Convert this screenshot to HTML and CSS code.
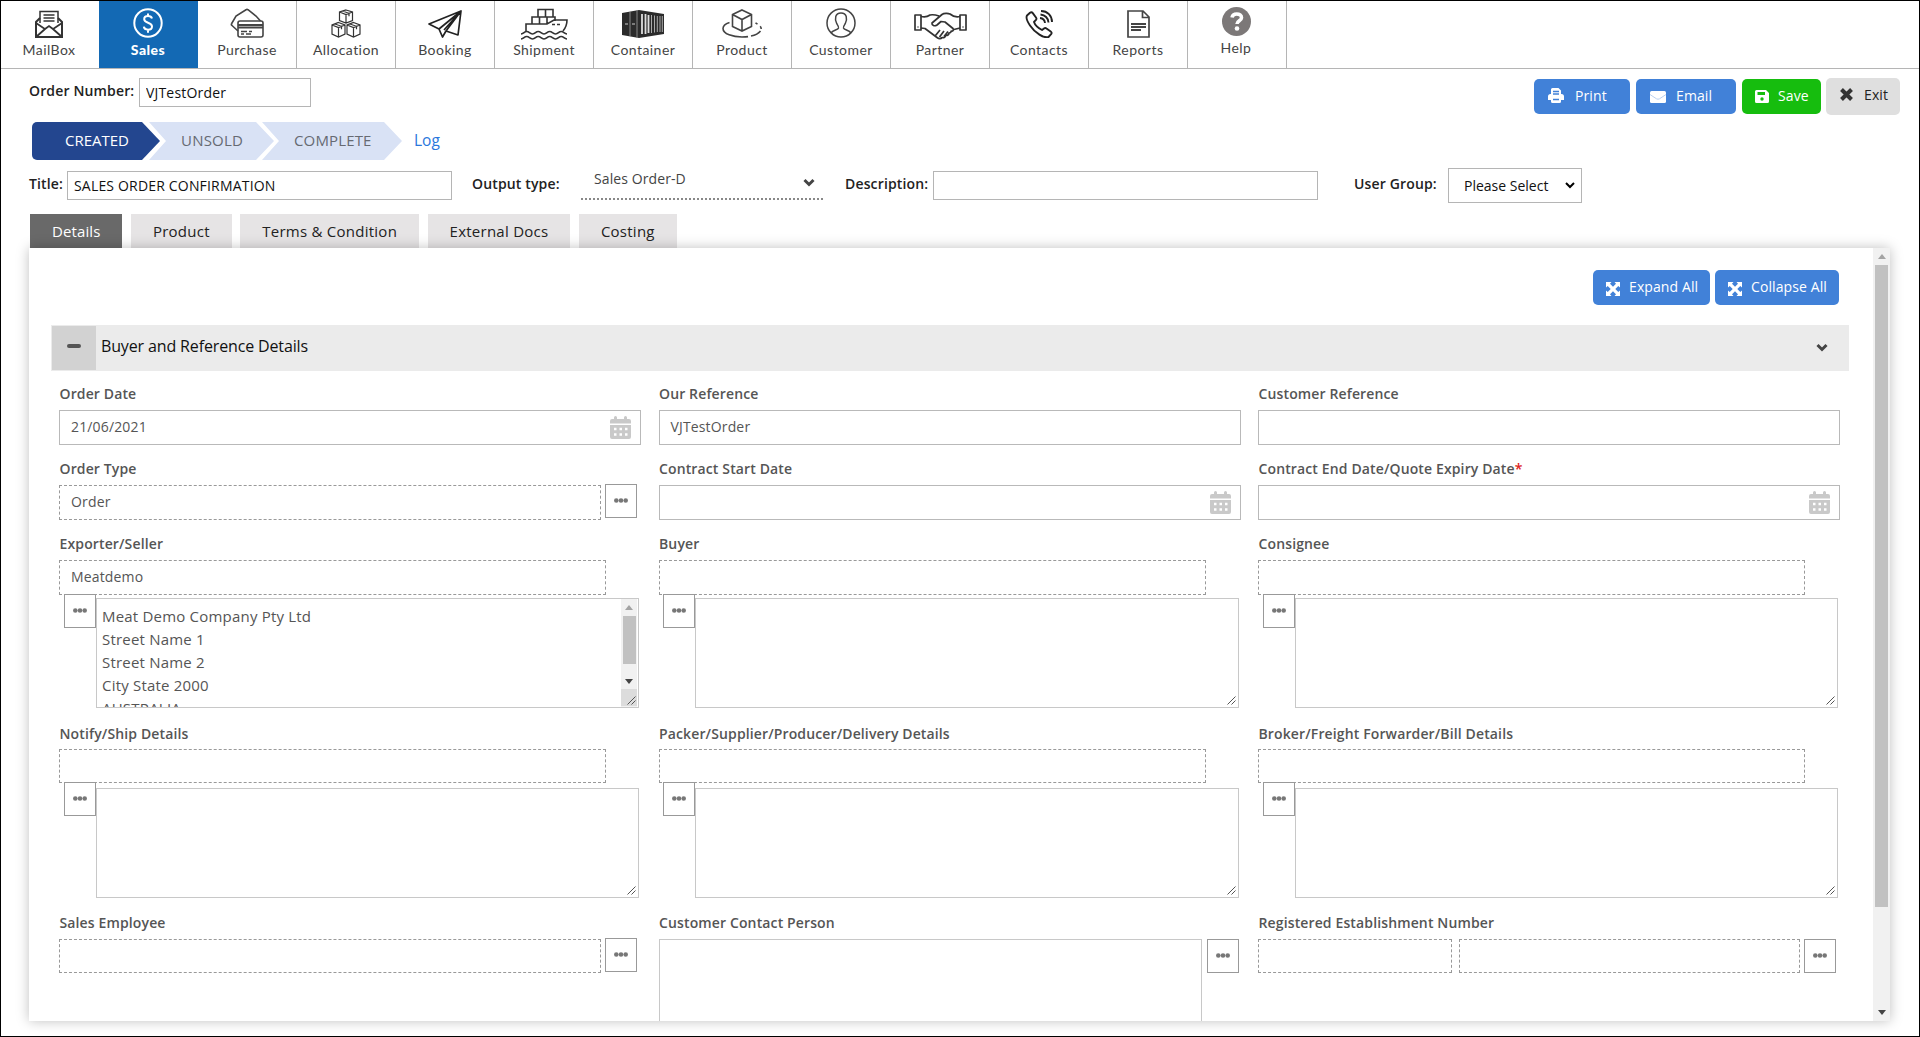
FILE: index.html
```html
<!DOCTYPE html>
<html lang="en">
<head>
    <meta charset="UTF-8">
    <meta name="viewport" content="width=device-width, initial-scale=1.0">
    <title>Sales Order</title>
    <link rel="stylesheet" href="styles.css">
</head>
<body>
    <!-- shared icons -->
    <svg class="defs" width="0" height="0">
        <symbol id="i-chevron" viewBox="0 0 12 8"><path d="M1.5 1.5 6 6l4.500-4.500" fill="none" stroke="currentColor" stroke-width="3"/></symbol>
        <symbol id="i-calendar" viewBox="0 0 21 23"><path fill="currentColor" d="M2 3h2V1.500a1.500 1.500 0 0 1 3 0V3h7V1.500a1.500 1.500 0 0 1 3 0V3h2a2 2 0 0 1 2 2v2.500H0V5a2 2 0 0 1 2-2zM0 9h21v12a2 2 0 0 1-2 2H2a2 2 0 0 1-2-2z"/><path stroke="#fff" stroke-width="2.500" stroke-dasharray="2.500 3" d="M4 13h14M4 18.500h14"/></symbol>
        <symbol id="i-dots" viewBox="0 0 14 5"><g fill="#777"><circle cx="2.300" cy="2.500" r="2.300"/><circle cx="7" cy="2.500" r="2.300"/><circle cx="11.700" cy="2.500" r="2.300"/></g></symbol>
        <symbol id="i-grip" viewBox="0 0 9 9"><path d="M.5 8.500 8.500.5M4.500 8.500l4-4" stroke="#555" fill="none"/></symbol>
        <symbol id="i-up" viewBox="0 0 8 5"><path d="M0 5 4 0l4 5z" fill="#a3a3a3"/></symbol>
        <symbol id="i-down" viewBox="0 0 8 5"><path d="M0 0h8L4 5z" fill="#444"/></symbol>
        <symbol id="i-expand" viewBox="0 0 14 14"><path fill="#fff" d="M0 0h5.500L4 1.700l3 3 3-3L8.500 0H14v5.500L12.300 4l-3 3 3 3L14 8.500V14H8.500l1.500-1.700-3-3-3 3L5.500 14H0V8.500L1.700 10l3-3-3-3L0 5.500z"/></symbol>
    </svg>

    <nav class="topnav">
        <a class="nav-item" href="#">
            <svg width="28" height="28" viewBox="0 0 28 28" fill="none" stroke="#333" stroke-width="1.500"><path d="M5 13V1.500h18V13M8.500 5h11M8.500 8h11M8.500 11h11"/><path d="M5 8 1 12v15h26V12l-4-4" stroke-width="2"/><path d="m1 13 9 6L1 27M27 13l-9 6 9 8M10 19l4-3 4 3" stroke-width="1.800"/></svg>
            <span>MailBox</span>
        </a>
        <a class="nav-item active" href="#">
            <svg width="30" height="30" viewBox="0 0 30 30" fill="none" stroke="#fff" stroke-width="2"><circle cx="15" cy="15" r="13.700"/><path d="M19 10.500c-.5-1.800-2-2.500-4-2.500-2.200 0-3.800 1.200-3.800 3.200 0 4.300 7.800 2.800 7.800 7.300 0 2-1.700 3.200-4 3.200s-3.900-1-4.200-3M15 5.500V8M15 21.700v3"/></svg>
            <span>Sales</span>
        </a>
        <a class="nav-item" href="#">
            <svg width="34" height="30" viewBox="0 0 34 30" fill="none" stroke="#444" stroke-width="1.600"><rect x="8" y="13" width="25" height="16" rx="2"/><path d="M8 17h25M8 19.500h25" stroke-width="2"/><path d="M11 23.500h6M11 26h3M19 23.500h3M16 26h5M8 23l-6-5.500a1.500 1.500 0 0 1-.3-2L6 8 16 1.700a2 2 0 0 1 2 0l8 6.300 4.500 5"/></svg>
            <span>Purchase</span>
        </a>
        <a class="nav-item" href="#">
            <svg width="30" height="29" viewBox="0 0 30 29" fill="none" stroke="#333" stroke-width="1.200"><path d="m15 1 6.500 2v8.500L15 14l-6.500-2.500V3zM8.500 3 15 5.500 21.500 3M15 5.500V14M11.500 2l6.500 2.300v3"/><path d="M7.500 13.500 14 16v9l-6.500 3L1 25v-9zM1 16l6.500 2.500L14 16M7.500 18.500V28M4 15l6.500 2.300v3M22.500 13.500 29 16v9l-6.500 3-6.500-3v-9zM16 16l6.500 2.500L29 16M22.500 18.500V28M19 15l6.500 2.300v3"/></svg>
            <span>Allocation</span>
        </a>
        <a class="nav-item" href="#">
            <svg width="34" height="28" viewBox="0 0 34 28" fill="none" stroke="#222" stroke-width="1.700" stroke-linejoin="round"><path d="M33 1 1 14l10 5zM33 1 11 19l3.500 8L18 21zM33 1l-3 24-12-4zM33 1 16 20"/></svg>
            <span>Booking</span>
        </a>
        <a class="nav-item low" href="#">
            <svg width="48" height="32" viewBox="0 0 48 32" fill="none" stroke="#333" stroke-width="1.600"><path d="M18 9V1.500h15V9M25.500 1.500V9M12 16V9h23v4M19.500 9v7M27 9v7M6 23v-7h21l7-4h13c0 5-1.500 8-4 11M32 16.500h3M37 16.500h3"/><path d="M1 26c3 0 3-2.500 5.700-2.500S9.500 26 12.500 26s3-2.500 5.700-2.500S21 26 24 26s3-2.500 5.700-2.500S32.500 26 35.500 26s3-2.500 5.700-2.500S44 26 47 26M1 31c3 0 3-2.500 5.700-2.500S9.500 31 12.500 31s3-2.500 5.700-2.500S21 31 24 31s3-2.500 5.700-2.500S32.500 31 35.500 31s3-2.500 5.700-2.500S44 31 47 31"/></svg>
            <span>Shipment</span>
        </a>
        <a class="nav-item" href="#">
            <svg width="42" height="28" viewBox="0 0 42 28"><path d="M0 3 17 0v28L0 25zM17 0l25 4v20l-25 4z" fill="#2b2b2b"/><path d="M8 2v24M15 0v28" stroke="#888"/><path d="M3 14h3M10 14h3" stroke="#ccc"/><path d="M20 4v20M23.500 4v20M26.500 5v18" stroke="#ddd" stroke-width="1.800"/><path d="M29.500 5v18M32.500 5.500v17M35.300 6v16M38 6v16M40.300 6v16" stroke="#aaa"/></svg>
            <span>Container</span>
        </a>
        <a class="nav-item" href="#">
            <svg width="40" height="29" viewBox="0 0 40 29" fill="none" stroke="#444" stroke-width="1.600"><path d="m20 1 9.500 4.500v12L20 22l-9.500-4.500v-12zM10.500 5.500 20 10.500l9.500-5M20 10.500V22"/><path d="M7.500 13.500C3 15 1 17 1 19.500 1 25 11 28 20 28c2 0 4 0 6-.4M29 27c5-1 8-3 9.500-5M39.200 20c0-1-.3-2-1-2.800M35.500 15l-2-1"/></svg>
            <span>Product</span>
        </a>
        <a class="nav-item" href="#">
            <svg width="30" height="30" viewBox="0 0 30 30" fill="none" stroke="#444" stroke-width="1.500"><circle cx="15" cy="15" r="14"/><path d="M5 25c2-3 7-3 7.500-5 .3-1.500-.5-2.500-1.800-4.500C8.500 11 9 5 15 5s6.500 6 4.300 10.500c-1.300 2-2.100 3-1.800 4.500.5 2 5.500 2 7.500 5"/></svg>
            <span>Customer</span>
        </a>
        <a class="nav-item low" href="#">
            <svg width="53" height="28" viewBox="0 0 53 28" fill="none" stroke="#333" stroke-width="1.700" stroke-linejoin="round"><path d="M1 3h6v15H1zM46 3h6v15h-6z"/><path d="M3.500 15h1M48.500 15h1M7 4.500c4 1 7 0 9-1.500 3-.7 6 0 9 1M46 4.500c-4 1-7 0-10-2.500-2-.8-6-.8-8 .5L18 11c-.3 2.500 2.500 3.500 5 2l4-3.500 4 .5 8 6.500c1 1.500 0 3-2 2.500M46 16l-6 1.500M7 16l4 .5 12 9c2 1.500 4 1.500 5 0 2 .5 3.500-.5 3.500-2 2 0 3.500-1 3.500-2.500 1.500 0 2.500-1 2-2.500M26 18l-4.500 5.500M30 19l-4.500 6M34 19.500l-4 5"/></svg>
            <span>Partner</span>
        </a>
        <a class="nav-item" href="#">
            <svg width="28" height="28" viewBox="0 0 28 28" fill="none" stroke="#222" stroke-width="1.900" stroke-linejoin="round"><path d="M2 5.500 5 2.800c1-.8 2-.7 2.800.3L11 7.500c.7 1 .5 2-.3 2.700L9 12c1 3 4 6 8 8l2-1.600c.8-.6 1.700-.6 2.500 0l4.200 3c1 .8 1.200 1.800.4 2.800L23.500 27C19 28.500 10 23 5 15.500 2 11 .5 8 2 5.500z"/><path d="M16 1c6.500 0 11 4.500 11 11M15.500 4.500C20 5 23 8 23.500 12.500M15 8c3 .3 4.700 2 5 5"/></svg>
            <span>Contacts</span>
        </a>
        <a class="nav-item" href="#">
            <svg width="23" height="28" viewBox="0 0 23 28" fill="none" stroke="#444" stroke-width="1.700"><path d="M1 1h15l6 6v20H1zM15.500 1v6.500H22"/><path d="M4 14h15M4 17h15M4 20h10" stroke-width="2"/></svg>
            <span>Reports</span>
        </a>
        <a class="nav-item help" href="#">
            <svg width="29" height="29" viewBox="0 0 29 29"><circle cx="14.500" cy="14.500" r="14.500" fill="#7c7878"/><path d="M10 10.500c.5-2.500 2-3.500 4.700-3.500 2.800 0 4.800 1.400 4.800 3.700 0 3.200-4.500 3-4.500 6.300" fill="none" stroke="#fff" stroke-width="3.600"/><circle cx="15" cy="21.500" r="2.300" fill="#fff"/></svg>
            <span>Help</span>
        </a>
    </nav>

    <header class="order-bar">
        <label class="lbl" for="order-no">Order Number:</label>
        <input class="top-input order-no" id="order-no" value="VJTestOrder">
        <div class="actions">
            <button class="btn print"><svg width="16" height="15" viewBox="0 0 16 15"><path fill="#fff" d="M3 1.500A1.500 1.500 0 0 1 4.500 0h6L13 2.500V6h.5A2.500 2.500 0 0 1 16 8.500V12h-3v1.500a1.500 1.500 0 0 1-1.500 1.500h-7A1.500 1.500 0 0 1 3 13.500V12H0V8.500A2.500 2.500 0 0 1 2.500 6H3z"/><path d="M5 3.500h6M5 6h6M5 11.500h6" stroke="#4181d8" stroke-width="1.500"/></svg>Print</button>
            <button class="btn email"><svg width="16" height="12" viewBox="0 0 16 12"><rect width="16" height="12" rx="1.500" fill="#fff"/><path d="m0 3.500 6.500 4.300a3 3 0 0 0 3 0L16 3.500" fill="none" stroke="#b9d0f0"/></svg>Email</button>
            <button class="btn save"><svg width="14" height="13" viewBox="0 0 14 13"><path fill="#fff" d="M1.500 0H11l3 3v8.500a1.500 1.500 0 0 1-1.500 1.500h-11A1.500 1.500 0 0 1 0 11.500v-10A1.500 1.500 0 0 1 1.500 0z"/><path d="M2.500 2H10v3H2.500z" fill="#16bd0e"/><circle cx="7" cy="9" r="1.700" fill="#16bd0e"/></svg>Save</button>
            <button class="btn exit"><svg width="13" height="13" viewBox="0 0 13 13"><path d="m1.500 1.500 10 10M11.500 1.500l-10 10" stroke="#333" stroke-width="4"/></svg>Exit</button>
        </div>
    </header>

    <div class="steps">
        <div class="step created">CREATED</div>
        <div class="step unsold">UNSOLD</div>
        <div class="step complete">COMPLETE</div>
        <a class="log" href="#">Log</a>
    </div>

    <div class="title-row">
        <label class="lbl" for="title">Title:</label>
        <input class="top-input title" id="title" value="SALES ORDER CONFIRMATION">
        <label class="lbl output-lbl">Output type:</label>
        <div class="output-type"><span>Sales Order-D</span><svg width="12" height="9"><use href="#i-chevron"/></svg></div>
        <label class="lbl desc-lbl" for="desc">Description:</label>
        <input class="top-input desc" id="desc">
        <label class="lbl group-lbl">User Group:</label>
        <div class="user-group"><span>Please Select</span><svg width="10" height="7" viewBox="0 0 10 7"><path d="m1 1 4 4 4-4" fill="none" stroke="#000" stroke-width="2"/></svg></div>
    </div>

    <div class="tabs">
        <a class="tab active" href="#">Details</a>
        <a class="tab" href="#">Product</a>
        <a class="tab" href="#">Terms &amp; Condition</a>
        <a class="tab" href="#">External Docs</a>
        <a class="tab" href="#">Costing</a>
    </div>

    <main class="panel">
        <div class="content">
            <div class="panel-actions">
                <button class="btn expand"><svg width="14" height="14"><use href="#i-expand"/></svg>Expand All</button>
                <button class="btn expand collapse"><svg width="14" height="14"><use href="#i-expand"/></svg>Collapse All</button>
            </div>

            <div class="section-head">
                <span class="toggle"></span>
                <h2>Buyer and Reference Details</h2>
                <svg width="12" height="9"><use href="#i-chevron"/></svg>
            </div>

            <div class="fields">
                <div class="field">
                    <label>Order Date</label>
                    <div class="box">21/06/2021<svg width="21" height="23"><use href="#i-calendar"/></svg></div>
                </div>
                <div class="field">
                    <label>Our Reference</label>
                    <div class="box">VJTestOrder</div>
                </div>
                <div class="field">
                    <label>Customer Reference</label>
                    <div class="box"></div>
                </div>

                <div class="field">
                    <label>Order Type</label>
                    <div class="line">
                        <div class="box dashed">Order</div>
                        <button class="more up"><svg width="14" height="5"><use href="#i-dots"/></svg></button>
                    </div>
                </div>
                <div class="field">
                    <label>Contract Start Date</label>
                    <div class="box"><svg width="21" height="23"><use href="#i-calendar"/></svg></div>
                </div>
                <div class="field">
                    <label>Contract End Date/Quote Expiry Date<em>*</em></label>
                    <div class="box"><svg width="21" height="23"><use href="#i-calendar"/></svg></div>
                </div>

                <div class="field">
                    <label>Exporter/Seller</label>
                    <div class="box dashed short">Meatdemo</div>
                    <div class="address">
                        <button class="more"><svg width="14" height="5"><use href="#i-dots"/></svg></button>
                        <div class="area">
                            <p>Meat Demo Company Pty Ltd<br>Street Name 1<br>Street Name 2<br>City State 2000<br>AUSTRALIA</p>
                            <div class="area-scroll">
                                <svg width="8" height="5"><use href="#i-up"/></svg>
                                <i></i>
                                <svg width="8" height="5"><use href="#i-down"/></svg>
                                <b></b>
                            </div>
                            <svg class="grip" width="9" height="9"><use href="#i-grip"/></svg>
                        </div>
                    </div>
                </div>
                <div class="field">
                    <label>Buyer</label>
                    <div class="box dashed short"></div>
                    <div class="address mid">
                        <button class="more"><svg width="14" height="5"><use href="#i-dots"/></svg></button>
                        <div class="area"><svg class="grip" width="9" height="9"><use href="#i-grip"/></svg></div>
                    </div>
                </div>
                <div class="field">
                    <label>Consignee</label>
                    <div class="box dashed short"></div>
                    <div class="address">
                        <button class="more"><svg width="14" height="5"><use href="#i-dots"/></svg></button>
                        <div class="area"><svg class="grip" width="9" height="9"><use href="#i-grip"/></svg></div>
                    </div>
                </div>

                <div class="field second">
                    <label>Notify/Ship Details</label>
                    <div class="box dashed short"></div>
                    <div class="address">
                        <button class="more"><svg width="14" height="5"><use href="#i-dots"/></svg></button>
                        <div class="area"><svg class="grip" width="9" height="9"><use href="#i-grip"/></svg></div>
                    </div>
                </div>
                <div class="field second">
                    <label>Packer/Supplier/Producer/Delivery Details</label>
                    <div class="box dashed short"></div>
                    <div class="address mid">
                        <button class="more"><svg width="14" height="5"><use href="#i-dots"/></svg></button>
                        <div class="area"><svg class="grip" width="9" height="9"><use href="#i-grip"/></svg></div>
                    </div>
                </div>
                <div class="field second">
                    <label>Broker/Freight Forwarder/Bill Details</label>
                    <div class="box dashed short"></div>
                    <div class="address">
                        <button class="more"><svg width="14" height="5"><use href="#i-dots"/></svg></button>
                        <div class="area"><svg class="grip" width="9" height="9"><use href="#i-grip"/></svg></div>
                    </div>
                </div>

                <div class="field last">
                    <label>Sales Employee</label>
                    <div class="line">
                        <div class="box dashed"></div>
                        <button class="more up"><svg width="14" height="5"><use href="#i-dots"/></svg></button>
                    </div>
                </div>
                <div class="field last">
                    <label>Customer Contact Person</label>
                    <div class="line contact">
                        <div class="area"></div>
                        <button class="more"><svg width="14" height="5"><use href="#i-dots"/></svg></button>
                    </div>
                </div>
                <div class="field last">
                    <label>Registered Establishment Number</label>
                    <div class="line">
                        <div class="box dashed reg-code"></div>
                        <div class="box dashed"></div>
                        <button class="more"><svg width="14" height="5"><use href="#i-dots"/></svg></button>
                    </div>
                </div>
            </div>
        </div>
        <div class="scrollbar">
            <svg width="8" height="5"><use href="#i-up"/></svg>
            <i></i>
            <svg class="down" width="8" height="5"><use href="#i-down"/></svg>
        </div>
    </main>
</body>
</html>
```

FILE: styles.css
```css
* { box-sizing: border-box; }
body {
    margin: 0;
    height: 1037px;
    overflow: hidden;
    border: 1px solid #000;
    background: #fff;
    color: #222;
    font-family: "Open Sans", "Noto Sans", sans-serif;
    font-size: 14px;
}
a { text-decoration: none; color: inherit; }
button, input { font: inherit; }
.defs { position: absolute; }

/* top navigation */
.topnav { display: flex; height: 68px; border-bottom: 1px solid #b5b5b5; }
.nav-item {
    display: flex;
    flex-direction: column;
    align-items: center;
    justify-content: flex-end;
    width: 99px;
    padding-bottom: 8px;
    border-right: 1px solid #b5b5b5;
    color: #444;
    font-family: Lato, sans-serif;
    font-size: 14px;
    letter-spacing: 0.45px;
    line-height: 20px;
}
.nav-item:first-child { width: 98px; padding-right: 2px; border-right: 0; }
.nav-item svg { margin-bottom: 2px; }
.nav-item.low svg { margin-bottom: 0; }
.nav-item.active { background: #1369b4; border-color: #1369b4; color: #fff; font-weight: 900; }
.nav-item.help { padding-bottom: 10px; padding-right: 2px; }

/* order number and buttons */
.order-bar { display: flex; align-items: flex-start; padding: 9px 19px 0 28px; height: 53px; }
.lbl { font-weight: 600; letter-spacing: 0.15px; line-height: 20px; white-space: nowrap; }
.order-bar .lbl { width: 110px; padding-top: 3px; }
.top-input { height: 29px; padding: 0 6px; border: 1px solid #b5b5b5; color: #111; letter-spacing: 0.18px; outline: 0; }
.order-no { width: 172px; }
.actions { display: flex; align-items: center; gap: 6px; margin-left: auto; }
.btn {
    display: flex;
    align-items: center;
    height: 35px;
    padding: 0 0 3px;
    border: 0;
    border-radius: 5px;
    background: #4181d8;
    color: #fff;
    letter-spacing: 0.1px;
    white-space: nowrap;
}
.print { width: 96px; padding-left: 14px; gap: 11px; }
.email { width: 100px; padding-left: 14px; gap: 10px; }
.email svg { margin-top: 4px; }
.save { width: 79px; padding-left: 13px; gap: 9px; background: #16bd0e; }
.save svg { margin-top: 2px; }
.exit { width: 74px; height: 37px; margin-left: -1px; padding: 0 0 4px 14px; gap: 11px; background: #dfdfdf; color: #222; }

/* order status */
.steps { display: flex; padding-left: 31px; height: 49px; font-size: 15px; line-height: 36px; }
.step {
    height: 38px;
    background: #d9e2f5;
    color: #666a72;
    clip-path: polygon(0 0, calc(100% - 18px) 0, 100% 50%, calc(100% - 18px) 100%, 0 100%, 17px 50%);
}
.created {
    width: 128px;
    padding-left: 33px;
    border-radius: 5px 0 0 5px;
    background: #23468f;
    color: #fff;
    clip-path: polygon(0 0, calc(100% - 18px) 0, 100% 50%, calc(100% - 18px) 100%, 0 100%);
}
.unsold { width: 125px; margin-left: -11px; padding-left: 32px; letter-spacing: 0.2px; }
.complete { width: 140px; margin-left: -12px; padding-left: 32px; letter-spacing: 0.15px; }
.log { margin-left: 12px; color: #2a77dc; font-size: 15.500px; }

.title-row { display: flex; align-items: flex-start; padding-left: 28px; height: 43px; }
.title-row .lbl { padding-top: 3px; }
.title-row .lbl:first-child { width: 38px; }
.title { width: 385px; }
.title-row .output-lbl { width: 129px; padding-left: 20px; }
.output-type {
    display: flex;
    justify-content: space-between;
    width: 242px;
    height: 29px;
    padding: 0 8px 0 13px;
    border-bottom: 2px dotted #888;
    color: #444;
    letter-spacing: 0.1px;
    line-height: 15px;
}
.output-type svg { margin-top: 7px; color: #444; }
.title-row .desc-lbl { width: 110px; padding-left: 22px; }
.desc { width: 385px; }
.title-row .group-lbl { width: 130px; padding-left: 36px; }
.user-group {
    display: flex;
    align-items: center;
    justify-content: space-between;
    width: 134px;
    height: 35px;
    margin-top: -3px;
    padding: 0 6px 0 15px;
    border: 1px solid #b5b5b5;
    color: #111;
}

/* tabs */
.tabs { display: flex; gap: 8.500px; padding-left: 29px; }
.tab { height: 34px; padding: 0 22px; background: #e6e4e5; font-size: 15px; letter-spacing: 0.25px; line-height: 34px; }
.tab.active { background: #696969; color: #fff; letter-spacing: 0.1px; }

/* details panel */
.panel {
    position: relative;
    display: flex;
    justify-content: space-between;
    width: 1861px;
    height: 773px;
    margin-left: 28px;
    overflow: hidden;
    background: #fff;
    box-shadow: 0 0 12px rgba(0, 0, 0, 0.25);
}
.content { width: 1820px; padding: 22px 0 0 22px; }
.panel-actions { display: flex; justify-content: flex-end; gap: 5px; padding-right: 10px; }
.expand { width: 117px; padding-left: 13px; gap: 9px; }
.expand svg { margin-top: 6px; }
.collapse { width: 124px; }
.section-head { display: flex; align-items: center; height: 46px; margin-top: 20px; padding-right: 21px; background: #ebebeb; color: #444; }
.section-head svg { margin-top: -1px; }
.toggle { display: flex; align-items: center; justify-content: center; width: 44px; height: 44px; margin-left: 1px; background: #d2d2d2; }
.toggle::before { content: ""; width: 14px; height: 4px; margin-top: -4px; border-radius: 2px; background: #555; }
.section-head h2 { flex: 1; margin: 0; padding: 0 0 5px 5px; color: #111; font-size: 16px; font-weight: 400; letter-spacing: -0.14px; }

.fields {
    display: grid;
    grid-template-columns: repeat(3, 582px);
    grid-template-rows: 61px 61px 175px 176px 175px;
    gap: 14px 17.500px;
    padding: 13px 0 0 8px;
    color: #555;
}
.field label { display: block; height: 26px; padding-left: 0.500px; font-weight: 600; letter-spacing: 0.13px; line-height: 20px; }
.field em { color: #d22; font-style: normal; }
.box { display: flex; justify-content: space-between; height: 35px; padding: 5px 9px 0 11px; border: 1px solid #b9b9b9; letter-spacing: 0.15px; line-height: 21px; }
.box.dashed { border: 1px dashed #999; }
.box svg { margin-left: auto; color: #c9c9c9; }
.short { width: 547px; }
.line { display: flex; align-items: flex-start; }
.line .box { flex: 1; margin-right: 4px; }
.line .reg-code { flex: 0 0 194px; margin-right: 7px; }
.line .more { margin-right: 4px; }
.more { flex: none; width: 32px; height: 34px; padding: 0 0 2px; border: 1px solid #999; background: #fff; line-height: 0; }
.up { margin-top: -1px; }
.address { display: flex; align-items: flex-start; padding-left: 5px; }
.address.mid { padding-left: 4px; }
.address .more { margin-top: -1px; }
.area { position: relative; display: flex; width: 543px; height: 110px; margin-top: 3px; border: 1px solid #c8c8c8; overflow: hidden; }
.mid .area { width: 544px; }
.area p { flex: 1; margin: 0; padding: 6px 0 0 5px; font-size: 15px; letter-spacing: 0.2px; line-height: 23px; }
.area-scroll { display: flex; flex-direction: column; align-items: center; width: 16px; margin-right: 1px; background: #f1f1f1; }
.area-scroll svg:first-child { margin: 6px 0 6px; }
.area-scroll i { width: 13px; height: 48px; margin-bottom: 15px; background: #c1c1c1; }
.area-scroll b { width: 16px; height: 17px; margin-top: 5px; background: #dcdcdc; }
.grip { position: absolute; right: 2px; bottom: 2px; }

.second label { height: 25px; margin-top: 1px; }
.second .box, .last .box { height: 34px; }
.second .area { margin-top: 5px; }
.contact .area { height: 140px; margin: 0 5px 0 0; }
.contact .more { margin-right: 0; }

.scrollbar { display: flex; flex-direction: column; align-items: center; width: 17px; background: #f1f1f1; }
.scrollbar svg { margin: 6px 0 6px; }
.scrollbar i { width: 13px; height: 642px; background: #c1c1c1; }
.scrollbar .down { margin: auto 0 6px; }
```
